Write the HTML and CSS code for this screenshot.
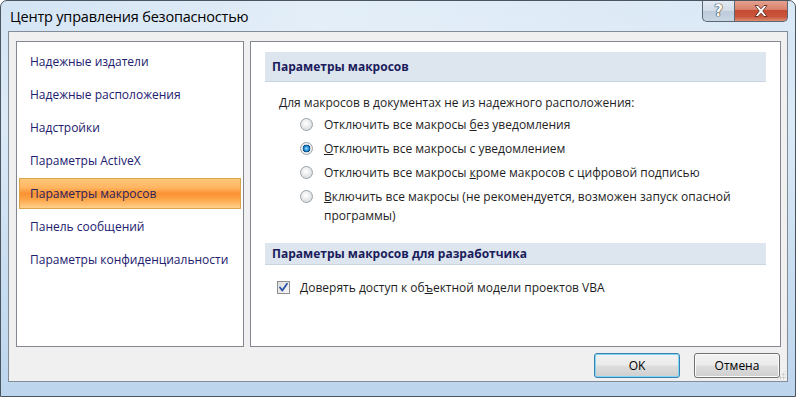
FILE: index.html
```html
<!DOCTYPE html>
<html lang="ru">
<head>
  <meta charset="UTF-8">
  <title>Центр управления безопасностью</title>
  <link rel="stylesheet" href="styles.css">
</head>
<body>
  <div class="window">
    <div class="titlebar">
      <span class="title">Центр управления безопасностью</span>
      <div class="caption-buttons">
        <div class="cap help">?</div>
        <div class="cap close">
          <svg width="16" height="14" viewBox="0 0 16 14">
            <path d="M2 1.5 L5 1.5 L8 4.8 L11 1.5 L14 1.5 L9.8 7 L14 12.5 L11 12.5 L8 9.2 L5 12.5 L2 12.5 L6.2 7 Z" fill="#fff" stroke="#5a2a20" stroke-width="0.9" stroke-linejoin="round"/>
          </svg>
        </div>
      </div>
    </div>

    <div class="client">
      <div class="panels">
        <div class="nav">
          <div class="nav-item">Надежные издатели</div>
          <div class="nav-item">Надежные расположения</div>
          <div class="nav-item">Надстройки</div>
          <div class="nav-item">Параметры ActiveX</div>
          <div class="nav-item selected">Параметры макросов</div>
          <div class="nav-item">Панель сообщений</div>
          <div class="nav-item">Параметры конфиденциальности</div>
        </div>

        <div class="content">
          <div class="section-head first">Параметры макросов</div>
          <div class="intro">Для макросов в документах не из надежного расположения:</div>
          <div class="options">
            <div class="option"><span class="radio"></span><span>Отключить все макросы <u>б</u>ез уведомления</span></div>
            <div class="option"><span class="radio checked"></span><span><u>О</u>тключить все макросы с уведомлением</span></div>
            <div class="option"><span class="radio"></span><span>Отключить все макросы <u>к</u>роме макросов с цифровой подписью</span></div>
            <div class="option"><span class="radio"></span><span><u>В</u>ключить все макросы (не рекомендуется, возможен запуск опасной программы)</span></div>
          </div>

          <div class="section-head second">Параметры макросов для разработчика</div>
          <div class="check-row">
            <span class="checkbox">
              <svg width="11" height="11" viewBox="0 0 11 11">
                <path d="M2 5.5 L4.3 8.5 L9 1.8" fill="none" stroke="#2a4fa8" stroke-width="1.8" stroke-linecap="round" stroke-linejoin="round"/>
              </svg>
            </span>
            <span>Доверять доступ к об<u>ъ</u>ектной модели проектов VBA</span>
          </div>
        </div>
      </div>

      <div class="footer">
        <button class="btn default">OK</button>
        <button class="btn">Отмена</button>
      </div>
      <div class="grip"></div>
    </div>
  </div>
</body>
</html>
```

FILE: styles.css
```css
body {
  margin: 0;
  padding: 0;
  background-color: #ffffff;
  font-family: "Open Sans", "Noto Sans", sans-serif;
}

.window {
  width: 794px;
  height: 395px;
  border: 1px solid #4a5560;
  border-radius: 7px 7px 0 0;
  background: linear-gradient(180deg, #d3e4f4 0%, #dceaf7 30%, #c8ddf0 70%, #bdd6ee 100%);
  position: relative;
  overflow: hidden;
}

.titlebar {
  height: 30px;
  display: flex;
  align-items: flex-start;
  background: linear-gradient(90deg, rgba(255,255,255,0.0) 0%, rgba(255,255,255,0.35) 40%, rgba(255,255,255,0.15) 100%);
}

.title {
  font-size: 14.5px;
  color: #000;
  padding: 6px 0 0 9px;
  letter-spacing: -0.2px;
}

.caption-buttons {
  margin-left: auto;
  margin-right: 7px;
  display: flex;
  margin-top: -1px;
}

.cap {
  height: 21px;
  display: flex;
  align-items: center;
  justify-content: center;
  border: 1px solid #5b6775;
  border-top: none;
}

.help {
  width: 31px;
  border-radius: 0 0 0 5px;
  background: linear-gradient(180deg, #e4ecf4 0%, #d2dde8 50%, #bccada 51%, #c8d6e4 100%);
  color: #ffffff;
  font-weight: bold;
  font-size: 15px;
  font-family: "DejaVu Sans", sans-serif;
  text-shadow: 0 0 1px #333, 0 0 1px #333, 0 0 1px #333;
  border-right: none;
}

.close {
  width: 52px;
  border-radius: 0 0 5px 0;
  background: linear-gradient(180deg, #e7a493 0%, #d8826d 45%, #c74a32 50%, #c9553c 80%, #dd8f70 100%);
}

.client {
  margin: 0 7px;
  height: 351px;
  border: 1px solid #828b96;
  background-color: #f0f0f0;
  box-sizing: border-box;
  padding: 9px 6px 0 7px;
  position: relative;
}

.panels {
  display: flex;
  gap: 6px;
  height: 306px;
}

.nav {
  width: 228px;
  box-sizing: border-box;
  border: 1px solid #828790;
  background-color: #ffffff;
  padding: 4px 2px 0 2px;
}

.nav-item {
  height: 31px;
  margin-bottom: 2px;
  box-sizing: border-box;
  border: 1px solid transparent;
  padding-left: 10px;
  display: flex;
  align-items: center;
  font-size: 12px;
  color: #22206e;
}

.nav-item.selected {
  border-color: #dba550;
  background: linear-gradient(180deg, #ffc77a 0%, #ffb560 30%, #fb9233 50%, #fca548 70%, #ffd08b 100%);
  color: #2a2260;
}

.content {
  width: 531px;
  box-sizing: border-box;
  border: 1px solid #828790;
  background-color: #ffffff;
  padding: 10px 14px 0 14px;
  font-size: 12px;
  color: #1e1e1e;
}

.section-head {
  background-color: #dde6ee;
  border-bottom: 1px solid #c9d5e1;
  font-weight: bold;
  color: #1b1c5c;
  padding-left: 7px;
  display: flex;
  align-items: center;
}

.section-head.first {
  height: 29px;
}

.section-head.second {
  height: 21px;
  margin-top: 18px;
}

.intro {
  padding-left: 14px;
  margin-top: 12px;
  height: 17px;
}

.options {
  padding-left: 35px;
  margin-top: 4px;
}

.option {
  display: flex;
  align-items: flex-start;
  gap: 11px;
  margin-bottom: 5px;
  line-height: 19px;
}

.option:last-child {
  margin-bottom: 0;
}

.radio {
  flex: none;
  width: 13px;
  height: 13px;
  margin-top: 3px;
  border-radius: 50%;
  box-sizing: border-box;
  border: 1px solid #9aa3ab;
  background: radial-gradient(circle at 45% 40%, #ffffff 0%, #eeeeee 40%, #c9ced3 100%);
}

.radio.checked {
  background: radial-gradient(circle at 50% 50%, #9fe2ff 0%, #1f8ad3 30%, #0b3f78 48%, #dde2e6 52%, #f4f4f4 75%, #c9ced3 100%);
}

.check-row {
  display: flex;
  align-items: center;
  gap: 10px;
  height: 17px;
  padding-left: 12px;
  margin-top: 14px;
}

.checkbox {
  width: 13px;
  height: 13px;
  box-sizing: border-box;
  border: 1px solid #8e8f8f;
  background: linear-gradient(135deg, #dcdcdc 0%, #f6f6f6 100%);
  display: flex;
  align-items: center;
  justify-content: center;
}

.footer {
  display: flex;
  justify-content: flex-end;
  gap: 14px;
  padding: 6px 1px 0 0;
}

.btn {
  width: 86px;
  height: 25px;
  border: 1px solid #707070;
  border-radius: 3px;
  background: linear-gradient(180deg, #f2f2f2 0%, #ebebeb 48%, #dddddd 52%, #cfcfcf 100%);
  font-family: "Open Sans", "Noto Sans", sans-serif;
  font-size: 12px;
  color: #000;
  padding: 0;
  box-shadow: inset 0 0 0 1px #fcfcfc;
}

.btn.default {
  border-color: #3c7fb1;
  box-shadow: inset 0 0 0 1px #7fd7f7;
}

.grip {
  position: absolute;
  right: 1px;
  bottom: 1px;
  width: 10px;
  height: 10px;
  background: radial-gradient(circle, #c0c0c0 0.8px, transparent 1.2px) 0 0 / 3px 3px;
  clip-path: polygon(100% 0, 100% 100%, 0 100%);
}
```
